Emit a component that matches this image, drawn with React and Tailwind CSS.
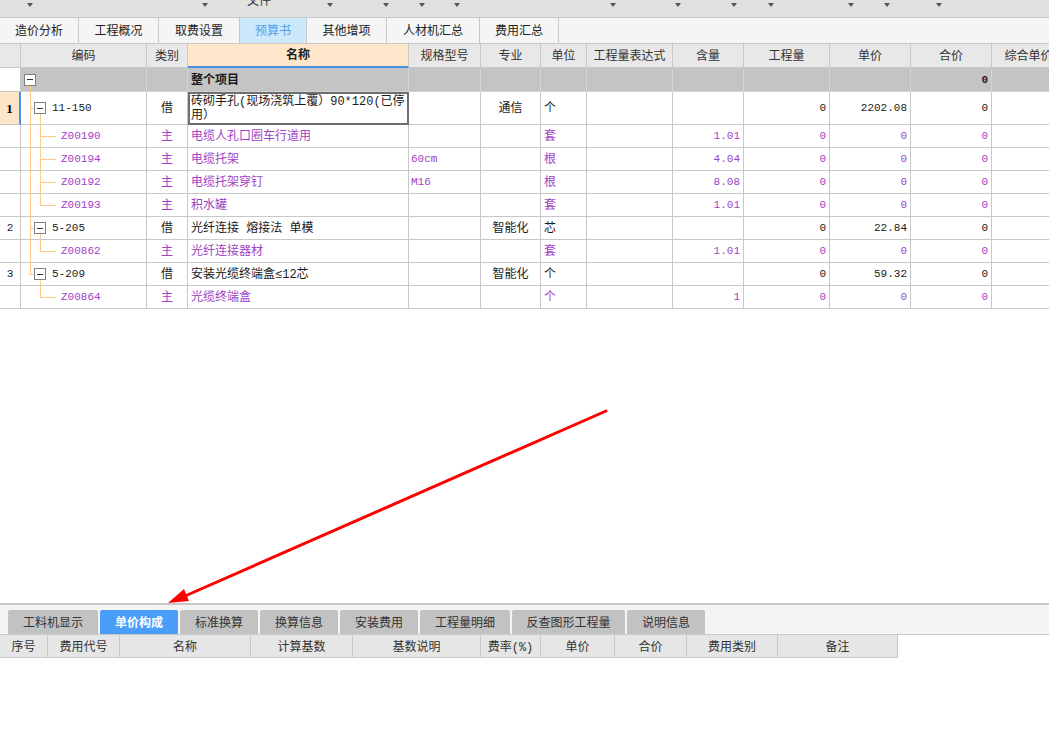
import React from 'react';

// column widths of the main grid
const W = ['w-[21px]', 'w-[126px]', 'w-[41px]', 'w-[221px]', 'w-[72px]', 'w-[60px]', 'w-[46px]', 'w-[86px]', 'w-[71px]', 'w-[86px]', 'w-[81px]', 'w-[81px]', 'w-[74px]'];
const heads = ['', '编码', '类别', '名称', '规格型号', '专业', '单位', '工程量表达式', '含量', '工程量', '单价', '合价', '综合单价'];

const PURPLE = 'text-[#a23fc5]';
const MONO = 'text-[11px]';
const TREE = 'absolute bg-[#ffc885]';

const rows = [
  { n: '1', code: '11-150', kind: '借', name: ['砖砌手孔(现场浇筑上覆）90*120(已停', '用）'], major: '通信', unit: '个', qty: '0', price: '2202.08', total: '0', level: 1, tall: true, sel: true },
  { code: 'Z00190', kind: '主', name: '电缆人孔口圈车行道用', unit: '套', content: '1.01', qty: '0', price: '0', total: '0' },
  { code: 'Z00194', kind: '主', name: '电缆托架', spec: '60cm', unit: '根', content: '4.04', qty: '0', price: '0', total: '0' },
  { code: 'Z00192', kind: '主', name: '电缆托架穿钉', spec: 'M16', unit: '根', content: '8.08', qty: '0', price: '0', total: '0' },
  { code: 'Z00193', kind: '主', name: '积水罐', unit: '套', content: '1.01', qty: '0', price: '0', total: '0', last: true },
  { n: '2', code: '5-205', kind: '借', name: '光纤连接 熔接法 单模', major: '智能化', unit: '芯', qty: '0', price: '22.84', total: '0', level: 1 },
  { code: 'Z00862', kind: '主', name: '光纤连接器材', unit: '套', content: '1.01', qty: '0', price: '0', total: '0', last: true },
  { n: '3', code: '5-209', kind: '借', name: '安装光缆终端盒≤12芯', major: '智能化', unit: '个', qty: '0', price: '59.32', total: '0', level: 1, rootHalf: true },
  { code: 'Z00864', kind: '主', name: '光缆终端盒', unit: '个', content: '1', qty: '0', price: '0', total: '0', last: true, noRoot: true },
];

const menuItems = [
  ['ml-[27px]'], ['ml-[169px]'], ['ml-[39px]', '文件'], ['ml-[56px]'], ['ml-[50px]'], ['ml-[30px]'], ['ml-[29px]'],
  ['ml-[150px]'], ['ml-[59px]'], ['ml-[50px]'], ['ml-[31px]'], ['ml-[74px]'], ['ml-[30px]'], ['ml-[46px]'],
];

const topTabs = [
  ['造价分析', 'w-[79px]'], ['工程概况', 'w-[80px]'], ['取费设置', 'w-[81px]'], ['预算书', 'w-[67px]'],
  ['其他增项', 'w-[80px]'], ['人材机汇总', 'w-[93px]'], ['费用汇总', 'w-[79px]'],
];

const bottomTabs = [
  ['工料机显示', 'w-[90px]'], ['单价构成', 'w-[78px]'], ['标准换算', 'w-[78px]'], ['换算信息', 'w-[78px]'],
  ['安装费用', 'w-[78px]'], ['工程量明细', 'w-[90px]'], ['反查图形工程量', 'w-[113px]'], ['说明信息', 'w-[78px]'],
];

const bottomHeads = [
  ['序号', 'w-[48px]'], ['费用代号', 'w-[72px]'], ['名称', 'w-[131px]'], ['计算基数', 'w-[102px]'], ['基数说明', 'w-[128px]'],
  ['费率(%)', 'w-[60px]'], ['单价', 'w-[74px]'], ['合价', 'w-[72px]'], ['费用类别', 'w-[91px]'], ['备注', 'w-[120px]'],
];

const Cell = ({ w, line = 'border-[#c8c8c8]', className = '', children }) => (
  <div className={`${w} shrink-0 h-full border-r border-b ${line} flex items-center overflow-hidden whitespace-nowrap ${className}`}>
    {children}
  </div>
);

const Box = ({ className = '' }) => (
  <span className={`relative z-10 w-3 h-3 shrink-0 border border-[#808080] bg-white flex items-center justify-center ${className}`}>
    <span className="w-[6px] h-px bg-[#333]" />
  </span>
);

const Arrow = ({ className = '' }) => (
  <span className={`w-0 h-0 mt-[3px] shrink-0 border-l-[3px] border-r-[3px] border-t-[4px] border-l-transparent border-r-transparent border-t-[#555] ${className}`} />
);

function CodeCell({ r }) {
  const child = !r.level;
  return (
    <Cell w={W[1]} className="relative">
      {!r.noRoot && <span className={`${TREE} left-[9px] w-px top-0 ${r.rootHalf ? 'bottom-1/2' : 'bottom-0'}`} />}
      {child ? (
        <>
          <span className={`${TREE} left-[19px] w-px top-0 ${r.last ? 'bottom-1/2' : 'bottom-0'}`} />
          <span className={`${TREE} left-[19px] w-[16px] h-px top-1/2`} />
          <span className={`ml-[40px] pt-[1px] ${MONO} ${PURPLE}`}>{r.code}</span>
        </>
      ) : (
        <>
          <span className={`${TREE} left-[9px] w-[4px] h-px top-1/2`} />
          <span className={`${TREE} left-[19px] w-px top-[calc(50%+6px)] bottom-0`} />
          <Box className="ml-[13px]" />
          <span className={`ml-[6px] pt-[1px] ${MONO}`}>{r.code}</span>
        </>
      )}
    </Cell>
  );
}

function DataRow({ r }) {
  const child = !r.level;
  const tone = child ? PURPLE : 'text-[#1a1a1a]';
  return (
    <div className={`flex ${r.tall ? 'h-[33px]' : 'h-[23px]'} bg-white ${tone}`}>
      {r.sel ? (
        <div className={`${W[0]} shrink-0 h-full pt-[1px] bg-[#fde5c8] border-b border-b-[#c8c8c8] border-r-2 border-r-[#4a90e2] flex items-center justify-center font-['Liberation_Serif',serif] font-bold text-[13px] text-black`}>
          {r.n}
        </div>
      ) : (
        <Cell w={W[0]} className={`justify-center pt-[1px] ${MONO}`}>{r.n}</Cell>
      )}
      <CodeCell r={r} />
      <Cell w={W[2]} className="justify-center pt-[2px]">{r.kind}</Cell>
      {Array.isArray(r.name) ? (
        <div className={`${W[3]} shrink-0 h-full border-2 border-[#6e6e6e] pl-[1px] pt-[1px] flex flex-col justify-center leading-[14px] whitespace-nowrap`}>
          <span>{r.name[0]}</span>
          <span>{r.name[1]}</span>
        </div>
      ) : (
        <Cell w={W[3]} className="pl-[3px] pt-[2px]">{r.name}</Cell>
      )}
      <Cell w={W[4]} className={`pl-[2px] pt-[1px] ${MONO}`}>{r.spec}</Cell>
      <Cell w={W[5]} className="justify-center pt-[2px]">{r.major}</Cell>
      <Cell w={W[6]} className="pl-[3px] pt-[2px]">{r.unit}</Cell>
      <Cell w={W[7]} />
      <Cell w={W[8]} className={`justify-end pr-[3px] pt-[1px] ${MONO}`}>{r.content}</Cell>
      <Cell w={W[9]} className={`justify-end pr-[3px] pt-[1px] ${MONO}`}>{r.qty}</Cell>
      <Cell w={W[10]} className={`justify-end pr-[3px] pt-[1px] ${MONO}`}>{r.price}</Cell>
      <Cell w={W[11]} className={`justify-end pr-[3px] pt-[1px] ${MONO}`}>{r.total}</Cell>
      <Cell w={W[12]} />
    </div>
  );
}

export default function App() {
  return (
    <div className="relative w-[1049px] h-[731px] overflow-hidden bg-white flex flex-col font-['Liberation_Mono','Noto_Sans_CJK_SC',monospace] text-[12px] text-[#1a1a1a]">
      {/* menu strip */}
      <div className="h-[18px] shrink-0 flex items-start bg-[#e1e1e1] border-b border-[#c9c9c9] text-[#333]">
        {menuItems.map(([ml, label], i) =>
          label ? (
            <span key={i} className={`${ml} -mt-[4px] leading-none w-[24px] shrink-0`}>{label}</span>
          ) : (
            <Arrow key={i} className={ml} />
          )
        )}
      </div>

      {/* page tabs */}
      <div className="h-[26px] shrink-0 flex bg-[#f5f5f5] border-b border-[#c9c9c9]">
        {topTabs.map(([t, w]) => (
          <div
            key={t}
            className={`${w} shrink-0 h-full pt-[3px] border-r border-[#c9c9c9] flex items-center justify-center ${t === '预算书' ? 'bg-[#cde7fb] text-[#4ea0ec]' : 'text-[#222]'}`}
          >
            {t}
          </div>
        ))}
      </div>

      {/* main grid */}
      <div className="flex-1 overflow-hidden">
        <div className="flex h-[24px] bg-[#e8e8e8] text-[#333]">
          {heads.map((h, i) =>
            i === 3 ? (
              <div key={i} className={`${W[i]} shrink-0 h-full pt-[2px] bg-[#fde6c9] border-r border-r-[#c8c8c8] border-b-2 border-b-[#4a90e2] flex items-center justify-center font-bold text-[#222]`}>
                {h}
              </div>
            ) : (
              <Cell key={i} w={W[i]} className="justify-center pt-[3px]">{h}</Cell>
            )
          )}
        </div>

        {/* whole project row */}
        <div className="flex h-[24px]">
          <Cell w={W[0]} className="bg-white" />
          <Cell w={W[1]} line="border-[#d2d2d2]" className="relative bg-[#c4c4c4]">
            <span className={`${TREE} left-[9px] w-px top-[calc(50%+6px)] bottom-0`} />
            <Box className="ml-[3px]" />
          </Cell>
          {W.slice(2).map((w, i) => (
            <Cell
              key={i}
              w={w}
              line="border-[#d2d2d2]"
              className={`bg-[#c4c4c4] font-bold pt-[2px] ${i === 1 ? 'pl-[3px]' : ''} ${i === 9 ? `justify-end pr-[3px] ${MONO}` : ''}`}
            >
              {i === 1 ? '整个项目' : i === 9 ? '0' : null}
            </Cell>
          ))}
        </div>

        {rows.map((r, i) => (
          <DataRow key={i} r={r} />
        ))}
      </div>

      {/* bottom detail panel */}
      <div className="h-[128px] shrink-0 border-t-2 border-[#c8c8c8] flex flex-col bg-white">
        <div className="h-[29px] shrink-0 bg-[#f4f4f4] flex items-end gap-[2px] pl-[8px]">
          {bottomTabs.map(([t, w]) => (
            <div
              key={t}
              className={`${w} shrink-0 h-[24px] pt-[3px] rounded-t-[2px] flex items-center justify-center ${t === '单价构成' ? 'bg-[#4a9efa] text-white font-bold' : 'bg-[#c2c2c2] text-[#333]'}`}
            >
              {t}
            </div>
          ))}
        </div>
        <div className="flex h-[24px] shrink-0 border-t border-[#c8c8c8] text-[#333]">
          {bottomHeads.map(([h, w]) => (
            <Cell key={h} w={w} className="justify-center pt-[3px] bg-[#e6e6e6]">{h}</Cell>
          ))}
        </div>
        <div className="flex-1" />
      </div>

      {/* annotation arrow */}
      <svg className="absolute left-0 top-0 pointer-events-none" width="1049" height="731" viewBox="0 0 1049 731">
        <line x1="606" y1="411" x2="185" y2="596" stroke="#ff0000" strokeWidth="3" strokeLinecap="round" />
        <polygon points="168,603 189,601 184,589" fill="#ff0000" />
      </svg>
    </div>
  );
}
